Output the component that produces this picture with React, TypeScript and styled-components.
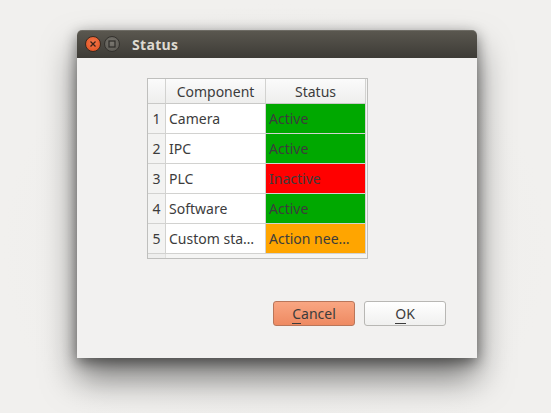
import React from "react";
import styled, { createGlobalStyle } from "styled-components";

const Global = createGlobalStyle`
  html, body { margin: 0; padding: 0; background: #f0efed; }
  body { width: 551px; height: 413px; overflow: hidden; font-family: "Noto Sans", "DejaVu Sans", sans-serif; }
`;

const Page = styled.div`
  width: 551px;
  height: 413px;
  box-sizing: border-box;
  padding: 30px 0 0 77px;
  background: radial-gradient(ellipse at 50% 60%, #ecebe9 0%, #f1f0ee 70%);
`;

const Window = styled.div`
  width: 400px;
  height: 328px;
  display: flex;
  flex-direction: column;
  border-radius: 5px 5px 0 0;
  background: #f2f1f0;
  box-shadow: 0 20px 34px rgba(0, 0, 0, 0.5), 0 4px 14px rgba(0, 0, 0, 0.45);
`;

const TitleBar = styled.div`
  height: 28px;
  display: flex;
  align-items: center;
  padding-left: 8px;
  gap: 3px;
  border-radius: 5px 5px 0 0;
  background: linear-gradient(#5b5850, #3d3b36);
  box-shadow: inset 0 1px 0 rgba(255, 255, 255, 0.12);
`;

const Circle = styled.div<{ $close?: boolean }>`
  width: 16px;
  height: 16px;
  border-radius: 50%;
  display: flex;
  align-items: center;
  justify-content: center;
  box-sizing: border-box;
  background: ${(p) =>
    p.$close
      ? "radial-gradient(circle at 50% 40%, #f4784c, #df4d1c)"
      : "radial-gradient(circle at 50% 40%, #7a7770, #55534d)"};
  border: 1px solid ${(p) => (p.$close ? "#3a2a20" : "#34322e")};
`;

const Title = styled.div`
  margin-left: 9px;
  color: #dfdbd2;
  font-family: "Open Sans", "DejaVu Sans", sans-serif;
  font-weight: 700;
  font-size: 14px;
  letter-spacing: 0.3px;
`;

const Body = styled.div`
  flex: 1;
  display: flex;
  flex-direction: column;
  padding: 20px 31px 32px 70px;
`;

const Frame = styled.div`
  width: 221px;
  height: 181px;
  box-sizing: border-box;
  border: 1px solid #bfbfbd;
  background: #f5f5f4;
  display: flex;
  flex-direction: column;
  font-size: 14px;
  color: #3c3c3c;
`;

const Grid = styled.div`
  display: grid;
  grid-template-columns: 18px 100px 100px;
  grid-template-rows: 25px repeat(5, 30px) 4px;
  flex: 1;
`;

const HeadCell = styled.div`
  box-sizing: border-box;
  border-right: 1px solid #d2d2d0;
  border-bottom: 1px solid #c9c9c7;
  background: linear-gradient(#fbfbfb, #eeeeed);
  display: flex;
  align-items: center;
  justify-content: center;
  padding-top: 1px;
`;

const NumCell = styled.div`
  box-sizing: border-box;
  border-right: 1px solid #d2d2d0;
  border-bottom: 1px solid #d2d2d0;
  background: #f3f3f2;
  display: flex;
  align-items: center;
  justify-content: center;
`;

const Cell = styled.div<{ $bg?: string }>`
  box-sizing: border-box;
  border-right: 1px solid #d2d2d0;
  border-bottom: 1px solid #d2d2d0;
  background: ${(p) => p.$bg || "#ffffff"};
  display: flex;
  align-items: center;
  padding-left: 3px;
  white-space: nowrap;
  overflow: hidden;
`;

const Filler = styled.div<{ $num?: boolean }>`
  background: ${(p) => (p.$num ? "#eeeeed" : "#f5f5f4")};
  border-right: ${(p) => (p.$num ? "1px solid #e0e0de" : "none")};
`;

const Spacer = styled.div`
  flex: 1;
`;

const Buttons = styled.div`
  display: flex;
  justify-content: flex-end;
  gap: 9px;
`;

const Button = styled.div<{ $primary?: boolean }>`
  width: 82px;
  height: 25px;
  box-sizing: border-box;
  border-radius: 3px;
  display: flex;
  align-items: center;
  justify-content: center;
  font-size: 14px;
  color: #3c3c3c;
  border: 1px solid ${(p) => (p.$primary ? "#b9765a" : "#b8b7b4")};
  background: ${(p) =>
    p.$primary ? "linear-gradient(#f9a682, #ee8a62)" : "linear-gradient(#ffffff, #f0f0ef)"};
  & u {
    text-decoration: none;
    border-bottom: 1px solid #3c3c3c;
    line-height: 14px;
  }
`;

const rows = [
  { n: 1, name: "Camera", status: "Active", bg: "#00a800" },
  { n: 2, name: "IPC", status: "Active", bg: "#00a800" },
  { n: 3, name: "PLC", status: "Inactive", bg: "#ff0000" },
  { n: 4, name: "Software", status: "Active", bg: "#00a800" },
  { n: 5, name: "Custom sta…", status: "Action nee…", bg: "#ffa500" },
];

export default function App() {
  return (
    <Page>
      <Global />
      <Window>
        <TitleBar>
          <Circle $close>
            <svg width="8" height="8" viewBox="0 0 8 8">
              <path d="M1.5 1.5 L6.5 6.5 M6.5 1.5 L1.5 6.5" stroke="#3a2218" strokeWidth="1.3" />
            </svg>
          </Circle>
          <Circle>
            <svg width="8" height="8" viewBox="0 0 8 8">
              <rect x="1" y="1" width="6" height="6" fill="none" stroke="#2e2c29" strokeWidth="1.2" />
            </svg>
          </Circle>
          <Title>Status</Title>
        </TitleBar>
        <Body>
          <Frame>
            <Grid>
              <HeadCell />
              <HeadCell>Component</HeadCell>
              <HeadCell>Status</HeadCell>
              {rows.map((r) => (
                <React.Fragment key={r.n}>
                  <NumCell>{r.n}</NumCell>
                  <Cell>{r.name}</Cell>
                  <Cell $bg={r.bg}>{r.status}</Cell>
                </React.Fragment>
              ))}
              <Filler $num />
              <Filler />
              <Filler />
            </Grid>
          </Frame>
          <Spacer />
          <Buttons>
            <Button $primary>
              <span>
                <u>C</u>ancel
              </span>
            </Button>
            <Button>
              <span>
                <u>O</u>K
              </span>
            </Button>
          </Buttons>
        </Body>
      </Window>
    </Page>
  );
}
